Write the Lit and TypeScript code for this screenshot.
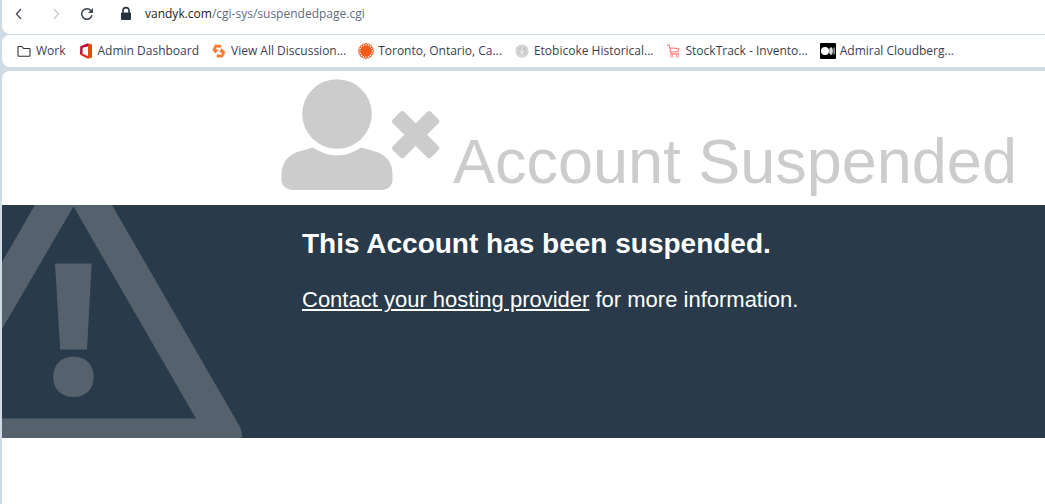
import { LitElement, html, css, svg } from "lit";
import { customElement } from "lit/decorators.js";

const petals = Array.from({ length: 16 }, (_, i) => {
  const a = (i * Math.PI) / 8;
  return svg`<circle cx=${8 + 6.1 * Math.cos(a)} cy=${8 + 6.1 * Math.sin(a)} r="1.4" />`;
});

const icons = {
  folder: svg`<path d="M2 12.5V4.2q0-.7.7-.7h3.1l1.8 2h5.7q.7 0 .7.7v6.3q0 .7-.7.7H2.7q-.7 0-.7-.7z" fill="none" stroke="#333" stroke-width="1.1" />`,
  office: svg`<path d="M10 .3 2.3 3.2 2 11.8l2.6-1.3V4.8L10 3.6z" fill="#b50e3c" />
    <path d="M2 11.8 4.6 10.5 10 13.2v2.6z" fill="#e52d28" />
    <path d="M10 .3 14 1.6v12.8l-4 1.4z" fill="#e14a10" />`,
  discussion: svg`<g fill="none" stroke="#fa7a32" stroke-width="2.6">
      <path d="M8.2 3.2 4.8 2.9 3.5 5.6 5.3 8.4" /><path d="M7.6 12.9 10.8 13.2 12.5 10.6 10.4 7.6" />
    </g>
    <path d="M.8 6.2 7.6 7 4.4 10.6zM8.2 9.2 10.4 5.2 15 9.6z" fill="#fa7a32" />
    <circle cx="8.6" cy="3.2" r="1.6" fill="#fa7a32" /><circle cx="7.2" cy="13" r="1.7" fill="#fa7a32" />`,
  sun: svg`<g fill="none" stroke="#f15a1c" stroke-width="1">${petals}</g><circle cx="8" cy="8" r="5.2" fill="#f4591a" />`,
  clock: svg`<circle cx="8" cy="8" r="6.6" fill="#cfcfcf" /><circle cx="8" cy="8" r="4.9" fill="#c2c2c2" stroke="#e6e6e6" stroke-width=".8" />
    <path d="M8 4v8M6 6.2v3.2L8 11l2-1.6V7" fill="none" stroke="#f2f2f2" stroke-width="1" />`,
  cart: svg`<path d="M1 2.2h2.2L5 11h8M3.8 4.8 12.8 5.6 12 8.8H4.6" fill="none" stroke="#ff8a8a" stroke-width="1.3" />
    <circle cx="5.5" cy="13" r="1.2" fill="none" stroke="#ff8a8a" /><circle cx="11.5" cy="13" r="1.2" fill="none" stroke="#ff8a8a" />`,
  medium: svg`<rect width="16" height="16" rx="1" fill="#000" /><circle cx="5" cy="8" r="4" fill="#fff" />
    <ellipse cx="11" cy="8" rx="1.8" ry="3.8" fill="#ddd" /><rect x="13.5" y="4.5" width="1.2" height="7" fill="#bbb" />`,
};

const bookmarks = [
  { icon: icons.folder, label: "Work" },
  { icon: icons.office, label: "Admin Dashboard" },
  { icon: icons.discussion, label: "View All Discussion..." },
  { icon: icons.sun, label: "Toronto, Ontario, Ca..." },
  { icon: icons.clock, label: "Etobicoke Historical..." },
  { icon: icons.cart, label: "StockTrack - Invento..." },
  { icon: icons.medium, label: "Admiral Cloudberg..." },
];

@customElement("browser-bar")
export class BrowserBar extends LitElement {
  static styles = css`
    :host {
      display: flex;
      flex-direction: column;
      gap: 1px;
      font-family: "Open Sans", "Noto Sans", sans-serif;
      font-size: 12px;
      line-height: 16px;
    }
    .toolbar,
    .bookmarks {
      display: flex;
      align-items: center;
      box-sizing: border-box;
      background: #fff;
      white-space: nowrap;
      overflow: hidden;
    }
    .toolbar {
      height: 34px;
      gap: 18px;
      padding: 0 8px 6px;
      border-radius: 0 0 0 8px;
    }
    .bookmarks {
      height: 32px;
      gap: 12px;
      padding: 0 14px;
      border-radius: 8px 0 0 8px;
    }
    button {
      display: flex;
      align-items: center;
      padding: 0;
      border: 0;
      background: none;
      font: inherit;
      color: #5f6b7a;
    }
    .address {
      flex: 1;
      gap: 11px;
      margin-left: 6px;
    }
    .host {
      color: #1c1e22;
    }
    .bookmark {
      display: flex;
      align-items: center;
      gap: 4px;
      color: #3b3e4f;
      text-decoration: none;
    }
    svg {
      flex: none;
    }
  `;

  render() {
    return html`
      <nav class="toolbar">
        <button aria-label="Back">
          <svg width="16" height="16" viewBox="0 0 16 16"><path d="M11 3 6.5 8 11 13" fill="none" stroke="#4a4f58" stroke-width="1.4" /></svg>
        </button>
        <button aria-label="Forward" disabled>
          <svg width="16" height="16" viewBox="0 0 16 16"><path d="M10 3 14.5 8 10 13" fill="none" stroke="#ccc" stroke-width="1.4" /></svg>
        </button>
        <button aria-label="Reload">
          <svg width="16" height="16" viewBox="0 0 16 16">
            <path d="M14 9.2A5.2 5.2 0 1 1 13 4.8" fill="none" stroke="#3c4654" stroke-width="1.5" />
            <path d="M15 2v5h-5z" fill="#3c4654" />
          </svg>
        </button>
        <button class="address" aria-label="Address">
          <svg width="16" height="16" viewBox="0 0 16 16">
            <rect x="3" y="6.5" width="10" height="7.5" rx="1" fill="#26333f" />
            <path d="M5 7V4.6a3 3 0 0 1 6 0V7" fill="none" stroke="#26333f" stroke-width="1.6" />
          </svg>
          <span><span class="host">vandyk.com</span>/cgi-sys/suspendedpage.cgi</span>
        </button>
      </nav>
      <nav class="bookmarks">
        ${bookmarks.map(
          (b) => html`<a class="bookmark" href="#"><svg width="16" height="16" viewBox="0 0 16 16">${b.icon}</svg>${b.label}</a>`
        )}
      </nav>
    `;
  }
}

@customElement("app-root")
export class AppRoot extends LitElement {
  static styles = css`
    :host {
      display: flex;
      flex-direction: column;
      gap: 4px;
      box-sizing: border-box;
      min-height: 100vh;
      padding-left: 2px;
      overflow: hidden;
      background: #d0dce5;
      font-family: "Liberation Sans", Arial, sans-serif;
    }
    .page {
      flex: 1;
      background: #fff;
      border-top-left-radius: 8px;
      overflow: hidden;
    }
    .heading {
      display: flex;
      align-items: flex-end;
      gap: 12px;
      padding: 8px 0 14px 279px;
      color: #ccc;
      white-space: nowrap;
    }
    .heading svg {
      flex: none;
    }
    h1 {
      margin: 0;
      font-size: 63px;
      font-weight: 400;
      line-height: 60px;
    }
    .notice {
      display: flex;
      gap: 60px;
      background: #293a4a;
      color: #fff;
    }
    .warning {
      display: block;
      flex: none;
    }
    .message {
      padding: 22px 20px 0 0;
    }
    h2 {
      margin: 0;
      font-size: 28px;
      line-height: 34px;
    }
    p {
      margin: 25px 0 0;
      font-size: 22px;
      line-height: 28px;
    }
    .message a {
      color: inherit;
    }
  `;

  render() {
    return html`
      <browser-bar></browser-bar>
      <main class="page">
        <header class="heading">
          <svg width="160" height="112" viewBox="0 0 160 112" fill="currentColor" aria-hidden="true">
            <circle cx="56" cy="35" r="34.8" />
            <path d="M32 68.5Q56 84.5 80 68.5L96 73Q111.500 79 111.500 95V102Q110 110 102 111H11Q2 110 .5 102V95Q1 79 16 73Z" />
            <g transform="translate(134.700 55.700) rotate(45)">
              <rect x="-27" y="-8" width="54" height="16" rx="3" /><rect x="-8" y="-27" width="16" height="54" rx="3" />
            </g>
          </svg>
          <h1>Account Suspended</h1>
        </header>
        <section class="notice">
          <svg class="warning" width="240" height="233" viewBox="0 0 240 233" fill="#55626e" aria-hidden="true">
            <path fill-rule="evenodd" d="M33 0H110L238 222Q240 226 240 233H0V213.500H194L71.500 1.500 0 124V57Z" />
            <path d="M53 58.500H89.700L85 144.500H58.200Z" />
            <path d="M71.500 151.500C84 151.500 91.700 160 91.700 172S84 192 71.500 192 51.200 184 51.200 172 59 151.500 71.500 151.500Z" />
          </svg>
          <div class="message">
            <h2>This Account has been suspended.</h2>
            <p><a href="#">Contact your hosting provider</a> for more information.</p>
          </div>
        </section>
      </main>
    `;
  }
}
